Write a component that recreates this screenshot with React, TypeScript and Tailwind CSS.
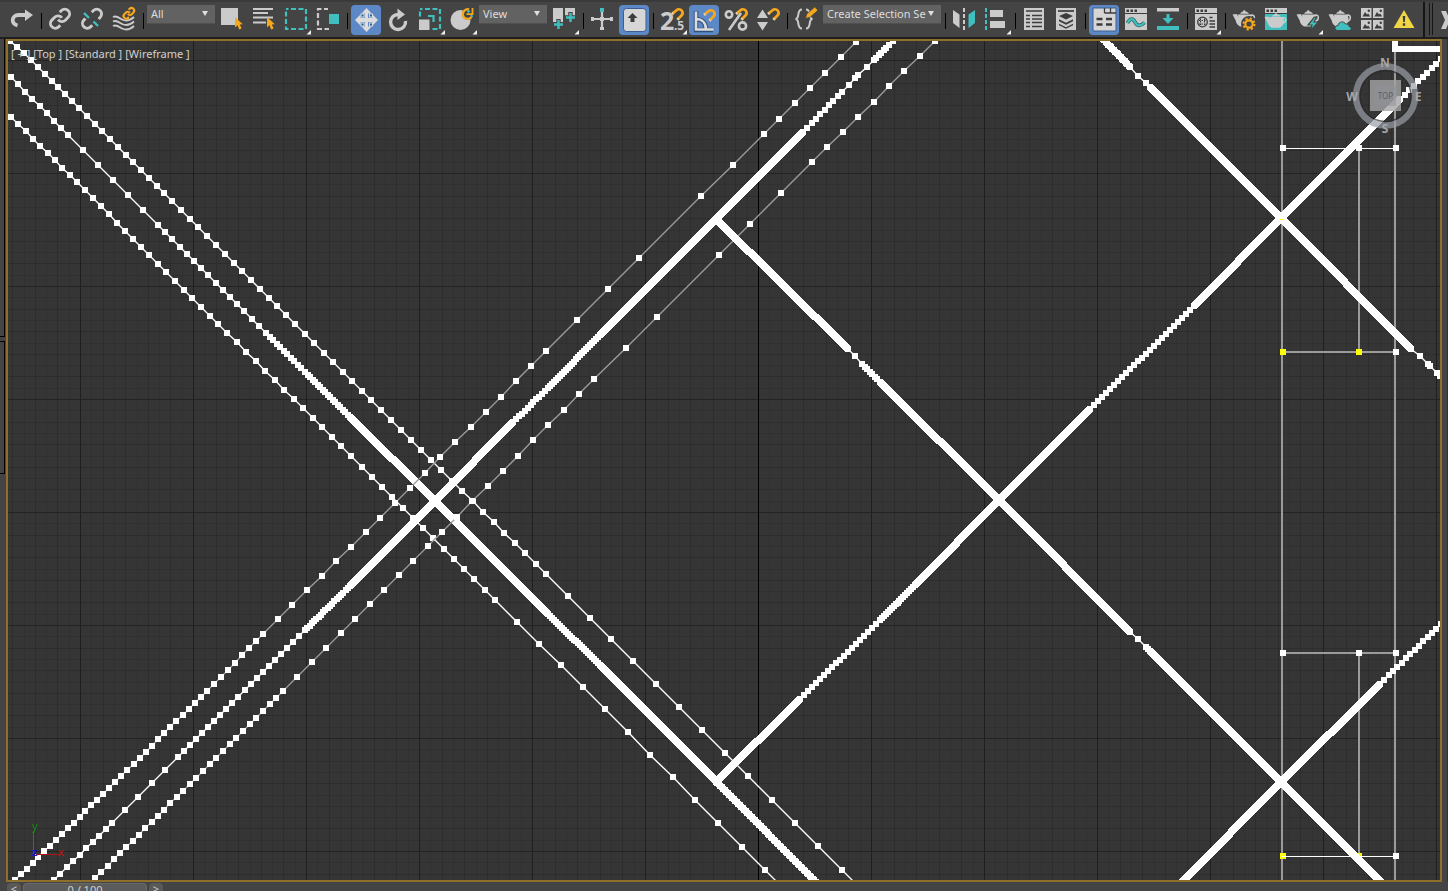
import { useState } from 'react';
import type { ReactNode } from 'react';
import clsx from 'clsx';

const GRAY = '#cbcbcb';
const DARK = '#3c3c3c';
const TEAL = '#41bfbf';
const ORANGE = '#f6a71c';

/* ---------- icons, all drawn on a 30x30 box ---------- */

const Cursor = ({ x, y }: { x: number; y: number }) => (
  <path transform={`translate(${x} ${y})`} d="M0 0v10.5l2.4-2.2 1.8 4.2 2.4-1-1.8-4.1 3-.2z" fill={ORANGE} />
);

const Magnet = ({ x = 0, y = 0 }: { x?: number; y?: number }) => (
  <g transform={`translate(${x} ${y})`} fill="none" strokeWidth="2.8">
    <path d="M15.5 8.5l4-3.2a3.6 3.6 0 0 1 5 5.2L21 14" stroke={ORANGE} />
    <path d="M15 9l1.5-1.2M20.4 14.8l1.2-1.4" stroke="#e8cf9a" />
  </g>
);

const ChainLink = () => (
  <>
    <path d="M10 13a5 5 0 0 0 7.54.54l3-3a5 5 0 0 0-7.07-7.07l-1.72 1.71" />
    <path d="M14 11a5 5 0 0 0-7.54-.54l-3 3a5 5 0 0 0 7.07 7.07l1.71-1.71" />
  </>
);

const Teapot = () => (
  <g fill={GRAY}>
    <path d="M8.5 9.5h13.5c2.5 3 2 8.5-2.5 12h-8.5c-2.5-1.5-4-3.5-4.300-6L3.5 9.5l4-.5 2 3z" />
    <path d="M11 8.800c1-1.800 2.5-2 3-2.200 0-1.800 2.5-1.800 2.5 0 1 .2 2.5.4 3.5 2.200z" />
    <path d="M21.5 10.5c5-2 5 4.5.5 6" fill="none" stroke={GRAY} strokeWidth="1.6" />
  </g>
);

const WindowFrame = ({ fill = GRAY }: { fill?: string }) => (
  <>
    <path d="M4 3h22v22H4z" fill={fill} />
    <path d="M4 3h22v5H4z" fill={GRAY} />
    <path d="M5.5 4.5h2.5v2.5h-2.5zM9.5 4.5h2.5v2.5h-2.5zM13.5 4.5h2.5v2.5h-2.5z" fill={DARK} />
    <path d="M4 8.5h22" stroke={DARK} />
  </>
);

const icons: Record<string, ReactNode> = {
  redo: (
    <>
      <path d="M10.5 20.5C3.5 18.5 4.5 10 11.5 10H20" fill="none" stroke={GRAY} strokeWidth="3.8" />
      <path d="M18 4.5l8 5.5-8 6z" fill={GRAY} />
    </>
  ),
  link: (
    <g transform="translate(3.5 2.2) scale(.96)" fill="none" stroke={GRAY} strokeWidth="3">
      <ChainLink />
    </g>
  ),
  unlink: (
    <>
      <g transform="translate(3.5 2.2) scale(.96)" fill="none" stroke={GRAY} strokeWidth="3">
        <path d="m18.84 12.25 1.72-1.71a5 5 0 0 0-.14-7.07 5 5 0 0 0-6.95 0l-1.72 1.71" />
        <path d="m5.17 11.75-1.71 1.71a5 5 0 0 0 .12 7.07 5 5 0 0 0 6.95 0l1.71-1.71" />
      </g>
      <path d="M7 8l5 5M16.5 16.500l4.500 4.500" stroke={TEAL} strokeWidth="2.4" />
    </>
  ),
  bind: (
    <>
      <g fill="none" stroke={GRAY} strokeWidth="1.9">
        <path d="M4 12c4-2 6 1 9 2.5s7 2 12-2.5" />
        <path d="M4 16.5c4-2 6 1 9 2.5s7 2 12-2.5" />
        <path d="M4 21c4-2 6 1 9 2.5s7 2 12-2.5" />
      </g>
      <g transform="translate(13.5 2) scale(.53)" fill="none" stroke={ORANGE} strokeWidth="4">
        <ChainLink />
      </g>
    </>
  ),
  select: (
    <>
      <path d="M4 3h17v17H4z" fill={GRAY} />
      <Cursor x={18} y={12} />
    </>
  ),
  selectByName: (
    <>
      <path d="M4 4h20M4 8h15M4 12.5h20M4 17.5h13" stroke={GRAY} strokeWidth="2" />
      <Cursor x={18} y={12} />
    </>
  ),
  region: <path d="M5 4h20v20H5z" fill="none" stroke={TEAL} strokeWidth="2.2" strokeDasharray="5 2.5" strokeDashoffset="2.5" />,
  crossing: (
    <>
      <path d="M15 4H5v20h11" fill="none" stroke={GRAY} strokeWidth="2.2" strokeDasharray="5 2.5" strokeDashoffset="1" />
      <path d="M16 9h10v10H16z" fill={TEAL} />
    </>
  ),
  move: (
    <>
      <path d="M15.5 3l5 5.5h-3.500v4.500h4.500v-3.500l5.500 5.500-5.500 5.500v-3.500h-4.500v4.500h3.500l-5 5.500-5-5.500h3.500v-4.500h-4.500v3.500L4 15l5.500-5.500v3.500h4.500v-4.500h-3.500z" fill="#dcdcdc" />
      <path d="M9.500 8.500h4v4h-4zM18 8.500h4v4h-4zM9.500 17.500h4v4h-4zM18 17.500h4v4h-4z" fill="#dcdcdc" />
      <path d="M10.500 9.500h2v2h-2zM19 9.500h2v2h-2zM10.500 18.500h2v2h-2zM19 18.500h2v2h-2z" fill="#33598c" />
    </>
  ),
  rotate: (
    <>
      <path d="M15.5 9.5A7.5 7.5 0 1 0 22.5 16" fill="none" stroke={GRAY} strokeWidth="3.4" />
      <path d="M14.5 3.5l7.5 6-7.5 5.5z" fill={GRAY} />
    </>
  ),
  scale: (
    <>
      <path d="M5 4h20v20H5z" fill="none" stroke={TEAL} strokeWidth="2.2" strokeDasharray="5 2.5" strokeDashoffset="2.5" />
      <path d="M3 13h13v13H3z" fill="#444" />
      <path d="M4 14.5h10.5V25H4z" fill={GRAY} />
      <path d="M13 11h5.5v6" fill="none" stroke={TEAL} strokeWidth="2.2" />
    </>
  ),
  place: (
    <>
      <circle cx="13.5" cy="15" r="10" fill={GRAY} />
      <circle cx="21" cy="9" r="6" fill="#444" />
      <path d="M24.500 12A4.800 4.800 0 1 1 22 4.500" fill="none" stroke={ORANGE} strokeWidth="2.4" />
      <path d="M19.500 9.200h6V3" fill="none" stroke={ORANGE} strokeWidth="1.8" />
      <path d="M20.500 7l2-1.500M24 11.500l1.500-1" stroke={TEAL} strokeWidth="2.2" />
    </>
  ),
  pivot: (
    <>
      <path d="M4 3h10v14H4zM16 3h10v9H16z" fill={GRAY} />
      <path d="M9.5 14v11M4 19.5h11M21.5 7v11M16 12.5h11" stroke="#444" strokeWidth="4.4" />
      <path d="M9.5 15v9M5 19.5h9M21.5 8v9M17 12.5h9" stroke={TEAL} strokeWidth="2.4" />
    </>
  ),
  manipulate: (
    <>
      <path d="M15 5v20M4 14h22" stroke={GRAY} strokeWidth="2.2" />
      <path d="M4 12h3v4H4zM23 12h3v4h-3zM13 22h4v3h-4zM13 12h4v4h-4z" fill={GRAY} />
      <path d="M13 3h4v4h-4z" fill={TEAL} />
    </>
  ),
  keyboard: (
    <>
      <rect x="4.5" y="3.5" width="22.5" height="23" rx="3" fill="#d6d6d6" stroke="#3c5f93" />
      <path d="M13.5 8l5 5h-3v4h-4v-4h-3z" fill={DARK} />
    </>
  ),
  snap: (
    <>
      <text x="3" y="25" fontSize="25" fontWeight="700" fill={GRAY}>2</text>
      <text x="17" y="25" fontSize="12" fontWeight="700" fill={GRAY}>.5</text>
      <Magnet />
    </>
  ),
  angle: (
    <>
      <path d="M7 6v19h17M7 14c6 0 10 4 10 11" fill="none" stroke="#2f4f7d" strokeWidth="4.5" />
      <path d="M7 6.5V24.5H24.5M7 14c6 0 10 4 10 10.5" fill="none" stroke="#dcdcdc" strokeWidth="2.6" />
      <Magnet y={1} />
    </>
  ),
  percent: (
    <>
      <g fill="none" stroke={GRAY} strokeWidth="2.6">
        <circle cx="8" cy="9.5" r="3.2" />
        <circle cx="21.5" cy="21" r="3.6" />
        <path d="M8 25L20 8" />
      </g>
      <Magnet />
    </>
  ),
  spinner: (
    <>
      <path d="M9.5 4.5l5.5 8.5H4zM9.5 25.5L15 17H4z" fill={GRAY} />
      <Magnet />
    </>
  ),
  sets: (
    <>
      <g fill="none" stroke={GRAY} strokeWidth="2">
        <path d="M11 4.5C5 4.5 9.5 13.5 4.5 14c5 .5.5 9.5 6.5 9.5" />
        <path d="M15 4.5c6 0 1.5 9 6.5 9.5-5 .5-.5 9.5-6.5 9.5" />
      </g>
      <path d="M14.5 13.5l1.2-4.5 8-7 3.3 3.3-8 7z" fill={ORANGE} stroke="#444" strokeWidth=".8" />
    </>
  ),
  mirror: (
    <>
      <path d="M4 5l6.5 4.5V23L4 18z" fill={GRAY} />
      <path d="M15 3v23" stroke={GRAY} strokeWidth="2" strokeDasharray="4 2" />
      <path d="M26 5l-6.5 4.5V23l6.500-5z" fill={TEAL} />
    </>
  ),
  align: (
    <>
      <path d="M5 3v23" stroke={TEAL} strokeWidth="2" strokeDasharray="4 2" />
      <path d="M9 5h13v7H9zM9 16h15v7H9z" fill={GRAY} />
    </>
  ),
  sceneList: (
    <>
      <path d="M5 3h20v22H5z" fill={GRAY} />
      <path d="M7 6h16M7 10.5h4M13 10.5h10M7 14h4M13 14h10M7 17.5h4M13 17.5h10M7 21.5h4M13 21.5h10" stroke={DARK} strokeWidth="1.7" />
    </>
  ),
  layers: (
    <>
      <path d="M5 3h20v22H5z" fill={GRAY} />
      <path d="M7 6h16" stroke={DARK} strokeWidth="1.7" />
      <path d="M15 8l7 3-7 3.5L8 11zM8 14.3l7 3.5 7-3.5v2l-7 3.5-7-3.5zM8 18.8l7 3.5 7-3.5v1.5l-7 3.5-7-3.5z" fill={DARK} />
    </>
  ),
  ribbon: (
    <>
      <path d="M4 3h23v23H4z" fill="#d6d6d6" stroke="#3c5f93" />
      <path d="M15.5 8H27M15.500 3v5M21.500 3v5" stroke={DARK} strokeWidth="1.3" />
      <path d="M7.5 14h6M17 14h6M7.5 19.5h6M17 19.5h6" stroke={DARK} strokeWidth="2.4" />
    </>
  ),
  curve: (
    <>
      <WindowFrame />
      <path d="M6.5 18c2.5-5 5.5-5 7.5-1s5 5 9.5.5" fill="none" stroke="#2c5f60" strokeWidth="3.8" />
      <path d="M6.5 18c2.5-5 5.5-5 7.5-1s5 5 9.5.5" fill="none" stroke={TEAL} strokeWidth="2.2" />
    </>
  ),
  schematic: (
    <>
      <path d="M4 3h22v3.5H4z" fill={GRAY} />
      <path d="M4 21h22v4H4z" fill={TEAL} />
      <path d="M13.5 9h3v4h4L15 19l-5.5-6h4z" fill={TEAL} />
    </>
  ),
  material: (
    <>
      <WindowFrame />
      <circle cx="11.5" cy="17" r="4.8" fill={GRAY} stroke={DARK} strokeWidth="1.3" />
      <path d="M9.5 13.5v7M13.5 13.5v7M8 15.5h7M8 19h7" stroke={DARK} strokeWidth="1.2" strokeDasharray="1.5 1" />
      <path d="M18.5 12.5h3M18.5 16h5.5M18.5 19h5.5M18.5 22h5.5" stroke={DARK} strokeWidth="1.5" />
    </>
  ),
  renderSetup: (
    <>
      <Teapot />
      <circle cx="20" cy="19" r="5.5" fill="none" stroke="#444" strokeWidth="5" />
      <circle cx="20" cy="19" r="5.5" fill="none" stroke={ORANGE} strokeWidth="2" strokeDasharray="2.2 2.12" />
      <circle cx="20" cy="19" r="3.7" fill="#444" stroke={ORANGE} strokeWidth="2.2" />
    </>
  ),
  renderFrame: (
    <>
      <WindowFrame fill={TEAL} />
      <g transform="translate(0 3.5) scale(.98 .9)"><Teapot /></g>
    </>
  ),
  render: (
    <>
      <Teapot />
      <path d="M21.5 12l-6.5 8h4l-2 6 8.5-9h-4.5l2.5-5z" fill={TEAL} stroke="#444" strokeWidth="1.2" />
    </>
  ),
  cloud: (
    <>
      <Teapot />
      <path d="M13 25.5c-4 0-4-5 0-5 .5-4.5 6.5-4.5 7.5-1.5 3-.5 3.5 1.5 3.5 2.500 3.500.5 2.500 4 0 4z" fill={TEAL} stroke="#444" strokeWidth="1" />
    </>
  ),
  gallery: (
    <>
      {[[4, 3], [16, 3], [4, 15], [16, 15]].map(([x, y]) => (
        <g key={`${x}-${y}`} transform={`translate(${x} ${y})`}>
          <path d="M0 0h10.5v10H0z" fill={GRAY} />
          <path d="M1.5 8.5l2.5-4.5 2 2.5 1.2-1 2 3z" fill={DARK} />
          <circle cx="7.8" cy="2.8" r="1.2" fill={DARK} />
        </g>
      ))}
    </>
  ),
  warning: (
    <>
      <path d="M15 5l10.5 18h-21z" fill="#f0d545" />
      <path d="M13.7 11h2.6l-.5 6h-1.6zM13.8 18.3h2.4v2.400h-2.400z" fill={DARK} />
    </>
  ),
};

/* ---------- toolbar ---------- */

interface ToolItem {
  type: 'tool' | 'sep' | 'select';
  icon?: string;
  label?: string;
  flyout?: boolean;
  options?: string[];
  wide?: boolean;
}

const tool = (icon: string, label: string, flyout = false): ToolItem => ({ type: 'tool', icon, label, flyout });
const sep: ToolItem = { type: 'sep' };

const toolbar: ToolItem[] = [
  tool('redo', 'Redo'),
  sep,
  tool('link', 'Select and Link'),
  tool('unlink', 'Unlink Selection'),
  tool('bind', 'Bind to Space Warp'),
  sep,
  { type: 'select', label: 'Selection Filter', options: ['All', 'Geometry', 'Shapes', 'Lights'] },
  tool('select', 'Select Object'),
  tool('selectByName', 'Select by Name'),
  tool('region', 'Rectangular Selection Region', true),
  tool('crossing', 'Window/Crossing'),
  sep,
  tool('move', 'Select and Move'),
  tool('rotate', 'Select and Rotate'),
  tool('scale', 'Select and Scale', true),
  tool('place', 'Select and Place', true),
  { type: 'select', label: 'Reference Coordinate System', options: ['View', 'Screen', 'World', 'Local'] },
  tool('pivot', 'Use Pivot Point Center', true),
  sep,
  tool('manipulate', 'Select and Manipulate'),
  tool('keyboard', 'Keyboard Shortcut Override'),
  sep,
  tool('snap', 'Snaps Toggle', true),
  tool('angle', 'Angle Snap Toggle'),
  tool('percent', 'Percent Snap Toggle'),
  tool('spinner', 'Spinner Snap Toggle'),
  sep,
  tool('sets', 'Edit Named Selection Sets'),
  { type: 'select', label: 'Named Selection Sets', options: ['Create Selection Se'], wide: true },
  sep,
  tool('mirror', 'Mirror'),
  tool('align', 'Align', true),
  sep,
  tool('sceneList', 'Toggle Scene Explorer'),
  tool('layers', 'Toggle Layer Explorer'),
  sep,
  tool('ribbon', 'Toggle Ribbon'),
  tool('curve', 'Curve Editor'),
  tool('schematic', 'Schematic View'),
  sep,
  tool('material', 'Material Editor', true),
  sep,
  tool('renderSetup', 'Render Setup'),
  tool('renderFrame', 'Rendered Frame Window'),
  tool('render', 'Render Production', true),
  tool('cloud', 'Render in the Cloud'),
  tool('gallery', 'Open Gallery'),
  tool('warning', 'Warnings'),
];

function Toolbar() {
  const [active, setActive] = useState<string[]>(['move', 'keyboard', 'angle', 'ribbon']);

  const toggle = (icon: string) => {
    setActive(active.includes(icon) ? active.filter(i => i !== icon) : [...active, icon]);
  };

  return (
    <header className="flex h-[39px] shrink-0 overflow-hidden border-t-2 border-b-2 border-t-[#3a3a3a] border-b-[#1f1f1f] bg-[#444444] pl-1.5">
      <div className="flex shrink-0 pt-[3px]">
        {toolbar.map((item, i) => {
          if (item.type === 'sep') {
            return <div key={i} className="mt-2 ml-[3px] h-4 w-[3px] shrink-0 border-l border-black" />;
          }
          if (item.type === 'select') {
            return (
              <div key={i} className={clsx('relative mx-px h-[19px] shrink-0', item.wide ? 'w-[118px]' : 'w-[68px]')}>
                <select
                  aria-label={item.label}
                  className="block h-full w-full appearance-none border-b border-[#505050] bg-[#626262] pl-1 text-[11px] leading-4 text-[#dddddd] outline-none"
                >
                  {item.options?.map(o => <option key={o}>{o}</option>)}
                </select>
                <svg className="pointer-events-none absolute top-1.5 right-[7px]" width="6" height="5" viewBox="0 0 6 5">
                  <path d="M0 0h6L3 5z" fill="#e0e0e0" />
                </svg>
              </div>
            );
          }
          const icon = item.icon ?? '';
          return (
            <button
              key={i}
              type="button"
              title={item.label}
              aria-label={item.label}
              onClick={() => toggle(icon)}
              className={clsx('mx-px h-[30px] w-[30px] shrink-0 rounded-sm', active.includes(icon) && 'bg-[#5c88c5]')}
            >
              <svg className="block overflow-visible" width="30" height="30" viewBox="0 0 30 30">
                {icons[icon]}
                {item.flyout && <path d="M30 25v4.5h-4.5z" fill="#f0f0f0" />}
              </svg>
            </button>
          );
        })}
      </div>
      <div className="ml-[3px] w-0.5 shrink-0 bg-[#161616]" />
      <div className="mt-px ml-1 h-8 w-1 shrink-0 border-x border-[#161616]" />
      <button type="button" aria-label="More tools" className="ml-2 h-full shrink-0">
        <svg width="12" height="20" viewBox="0 0 12 20">
          <path d="M0 1l4 9-4 9h5l4-9-4-9z" fill={GRAY} />
        </svg>
      </button>
    </header>
  );
}

/* ---------- viewport drawing ---------- */

// x, y, and how many vertices lie between this waypoint and the last one
type Waypoint = [number, number, number];

interface Strand {
  color: string;
  points: Waypoint[];
}

const THIN = '#9b9b9b';

const strands: Strand[] = [
  {
    color: '#fff',
    points: [[10, 41, 0], [24, 53, 2], [79, 108, 8], [172, 201, 12], [295, 324, 14], [371, 400, 8], [431, 460, 6], [546, 574, 11], [633, 661, 4], [725, 753, 4], [818, 846, 4], [865, 893, 2]],
  },
  {
    color: '#fff',
    points: [[11, 77, 0], [68, 135, 8], [158, 225, 6], [266, 333, 15], [305, 372, 11], [350, 417, 18], [435, 501, 85], [548, 614, 113], [600, 665, 26], [716, 781, 116], [820, 886, 70]],
  },
  {
    color: '#fff',
    points: [[4, 111, 0], [11, 117, 1], [77, 182, 9], [149, 255, 9], [227, 333, 9], [341, 446, 12], [495, 600, 15], [605, 709, 5], [695, 800, 4], [788, 893, 4]],
  },
  {
    color: THIN,
    points: [[15, 880, 0], [103, 794, 15], [207, 691, 17], [263, 634, 8], [395, 503, 9], [546, 351, 10], [639, 258, 3], [701, 196, 1], [764, 134, 2], [856, 42, 6]],
  },
  {
    color: '#fff',
    points: [[54, 880, 0], [112, 823, 9], [178, 757, 5], [305, 630, 21], [350, 586, 20], [435, 501, 85], [513, 422, 78], [548, 388, 12], [600, 335, 26], [716, 219, 116], [803, 132, 87], [842, 92, 9], [849, 85, 1], [855, 78, 1], [858, 75, 1], [867, 67, 1], [874, 60, 1], [886, 48, 5], [896, 38, 3]],
  },
  {
    color: THIN,
    points: [[95, 878, 0], [183, 791, 14], [283, 691, 15], [442, 532, 11], [594, 379, 10], [657, 317, 2], [719, 255, 1], [812, 162, 3], [935, 41, 8]],
  },
  {
    color: '#fff',
    points: [[716, 219, 0], [848, 349, 132], [855, 356, 1], [862, 364, 1], [867, 369, 2], [880, 382, 5], [999, 500, 119], [1130, 632, 131], [1138, 639, 1], [1146, 647, 1], [1150, 651, 2], [1281, 782, 131], [1384, 885, 103]],
  },
  {
    color: '#fff',
    points: [[716, 782, 0], [800, 699, 84], [880, 620, 20], [915, 585, 18], [999, 500, 85], [1090, 409, 91], [1194, 306, 26], [1281, 218, 88], [1400, 99, 119], [1445, 55, 10]],
  },
  {
    color: '#fff',
    points: [[1103, 39, 0], [1130, 67, 20], [1138, 76, 1], [1146, 83, 1], [1150, 87, 1], [1281, 218, 131], [1411, 349, 130], [1420, 356, 1], [1428, 364, 1], [1430, 366, 1], [1437, 373, 1], [1443, 379, 2]],
  },
  {
    color: '#fff',
    points: [[1180, 884, 0], [1281, 782, 101], [1380, 684, 98], [1445, 620, 15]],
  },
];

const getVertices = (points: Waypoint[]) => {
  const out: [number, number][] = [[points[0][0], points[0][1]]];
  for (let i = 1; i < points.length; i++) {
    const [x0, y0] = points[i - 1];
    const [x1, y1, n] = points[i];
    for (let k = 1; k <= n; k++) {
      out.push([Math.round(x0 + ((x1 - x0) * k) / n), Math.round(y0 + ((y1 - y0) * k) / n)]);
    }
  }
  return out;
};

const handles: { x: number; y: number; color: string }[] = [
  { x: 1282, y: 148, color: '#fff' },
  { x: 1358, y: 148, color: '#fff' },
  { x: 1395, y: 148, color: '#fff' },
  { x: 1282, y: 352, color: '#ff0' },
  { x: 1358, y: 352, color: '#ff0' },
  { x: 1395, y: 352, color: '#fff' },
  { x: 1282, y: 653, color: '#fff' },
  { x: 1358, y: 653, color: '#fff' },
  { x: 1395, y: 653, color: '#fff' },
  { x: 1282, y: 856, color: '#ff0' },
  { x: 1358, y: 856, color: '#ff0' },
  { x: 1395, y: 856, color: '#fff' },
];

const range = (from: number, to: number) => Array.from({ length: to - from + 1 }, (_, i) => from + i);

function Grid() {
  return (
    <g shapeRendering="crispEdges">
      {range(-6, 120).filter(k => k % 10 !== 0).map(k => (
        <rect key={`v${k}`} x={Math.round(80 + k * 11.3)} y="41" width="1" height="839" fill={k % 2 ? '#303030' : '#2d2d2d'} />
      ))}
      {range(-1, 72).filter(k => k % 10 !== 0).map(k => (
        <rect key={`h${k}`} x="8" y={Math.round(60 + k * 11.3)} width="1432" height="1" fill={k % 2 ? '#303030' : '#2d2d2d'} />
      ))}
      {range(0, 7).map(k => (
        <rect key={`H${k}`} x="8" y={60 + k * 113} width="1432" height="1" fill="#232323" />
      ))}
      {range(0, 12).map(k => (
        <rect key={`V${k}`} x={80 + k * 113} y="41" width="1" height="839" fill={k === 6 ? '#000' : '#1f1f1f'} />
      ))}
    </g>
  );
}

function ViewCube() {
  return (
    <g>
      <circle cx="1385.5" cy="96" r="29.5" fill="none" stroke="#9aa0a8" strokeOpacity=".7" strokeWidth="6.5" />
      <circle cx="1385.5" cy="96" r="25.5" fill="none" stroke="#2a2a2a" strokeOpacity=".7" strokeWidth="1.5" />
      <rect x="1370" y="80" width="31" height="31" fill="#a5a5a5" fillOpacity=".8" />
      <rect x="1375" y="85" width="21" height="21" fill="#8f9297" fillOpacity=".5" />
      <text x="1385.5" y="99" fontSize="8" textAnchor="middle" fill="#5c5f66">TOP</text>
      <g fontSize="12" fontWeight="700" textAnchor="middle" fill="#a6a6a6">
        <text x="1385" y="67">N</text>
        <text x="1418" y="101">E</text>
        <text x="1385" y="133">S</text>
        <text x="1352" y="101">W</text>
      </g>
    </g>
  );
}

function Scene() {
  return (
    <svg
      className="block h-full w-full bg-[#353535]"
      viewBox="8 41 1432 839"
      preserveAspectRatio="xMinYMin slice"
      role="img"
      aria-label="Top wireframe view"
    >
      <Grid />
      <g shapeRendering="crispEdges">
        <path d="M1282 41v839M1395 41v839M1359 148v204M1359 653v203" stroke={THIN} strokeWidth="2" />
        <path d="M1282 352h114M1282 653h114" stroke={THIN} strokeWidth="2" />
        {handles.map(h => (
          <rect key={`${h.x}-${h.y}`} x={h.x - 2} y={h.y - 3} width="6" height="6" fill={h.color} />
        ))}
        <path d="M1282 148.5h114M1282 856.5h114" stroke="#fff" />
        <path d="M1392 41h6v5h42v6h-48z" fill="#fff" />
      </g>
      {strands.map((s, i) => {
        const vertices = getVertices(s.points);
        return (
          <g key={i}>
            <polyline points={vertices.map(v => v.join(',')).join(' ')} fill="none" stroke={s.color} strokeWidth="1.4" />
            <path d={vertices.map(([x, y]) => `M${x - 3} ${y - 3}h6v6h-6z`).join('')} fill="#fff" shapeRendering="crispEdges" />
          </g>
        );
      })}
      <path d="M1280 219.5h4" stroke="#ff0" />
      <ViewCube />
      <g fontSize="11">
        <path d="M33.5 854V831" stroke="#0f8a12" />
        <path d="M36 854.5h23" stroke="#b01515" />
        <text x="32" y="830" fill="#0f8a12">y</text>
        <text x="58" y="856" fill="#c01515">x</text>
        <text x="32" y="856" fontWeight="700" fill="#1515d0">z</text>
      </g>
    </svg>
  );
}

function Viewport() {
  return (
    <main className="relative min-w-0 flex-1 overflow-hidden border-2 border-[#8f6f2c]">
      <Scene />
      <nav className="absolute top-[5px] left-[3px] flex gap-[3px] text-[11px] leading-4 text-[#d0d0d0]">
        <button type="button">[ + ]</button>
        <button type="button">[Top ]</button>
        <button type="button">[Standard ]</button>
        <button type="button">[Wireframe ]</button>
      </nav>
    </main>
  );
}

export default function App() {
  return (
    <div className="flex h-screen flex-col overflow-hidden bg-[#444444] font-['Noto_Sans','Open_Sans',sans-serif]">
      <Toolbar />
      <div className="flex min-h-0 flex-1">
        <aside className="flex w-1.5 shrink-0 flex-col pr-px">
          <div className="h-[298px] border-r border-b border-black" />
          <div className="mt-1 h-[133px] border-t border-r border-b border-black" />
        </aside>
        <Viewport />
        <div className="w-1.5 shrink-0 border-r border-[#333333]" />
      </div>
      <footer className="flex h-[9px] shrink-0 items-start gap-0.5 overflow-hidden pt-px pl-[7px] text-[11px] leading-3 text-[#d0d0d0]">
        <button type="button" aria-label="Previous frame" className="h-3 w-3.5 rounded-t-sm bg-[#595959]">&lt;</button>
        <button type="button" className="h-3 w-[124px] rounded-t-sm border-x border-t border-[#6a6a6a] bg-[#5c5c5c]">0 / 100</button>
        <button type="button" aria-label="Next frame" className="h-3 w-3.5 rounded-t-sm bg-[#595959]">&gt;</button>
      </footer>
    </div>
  );
}
